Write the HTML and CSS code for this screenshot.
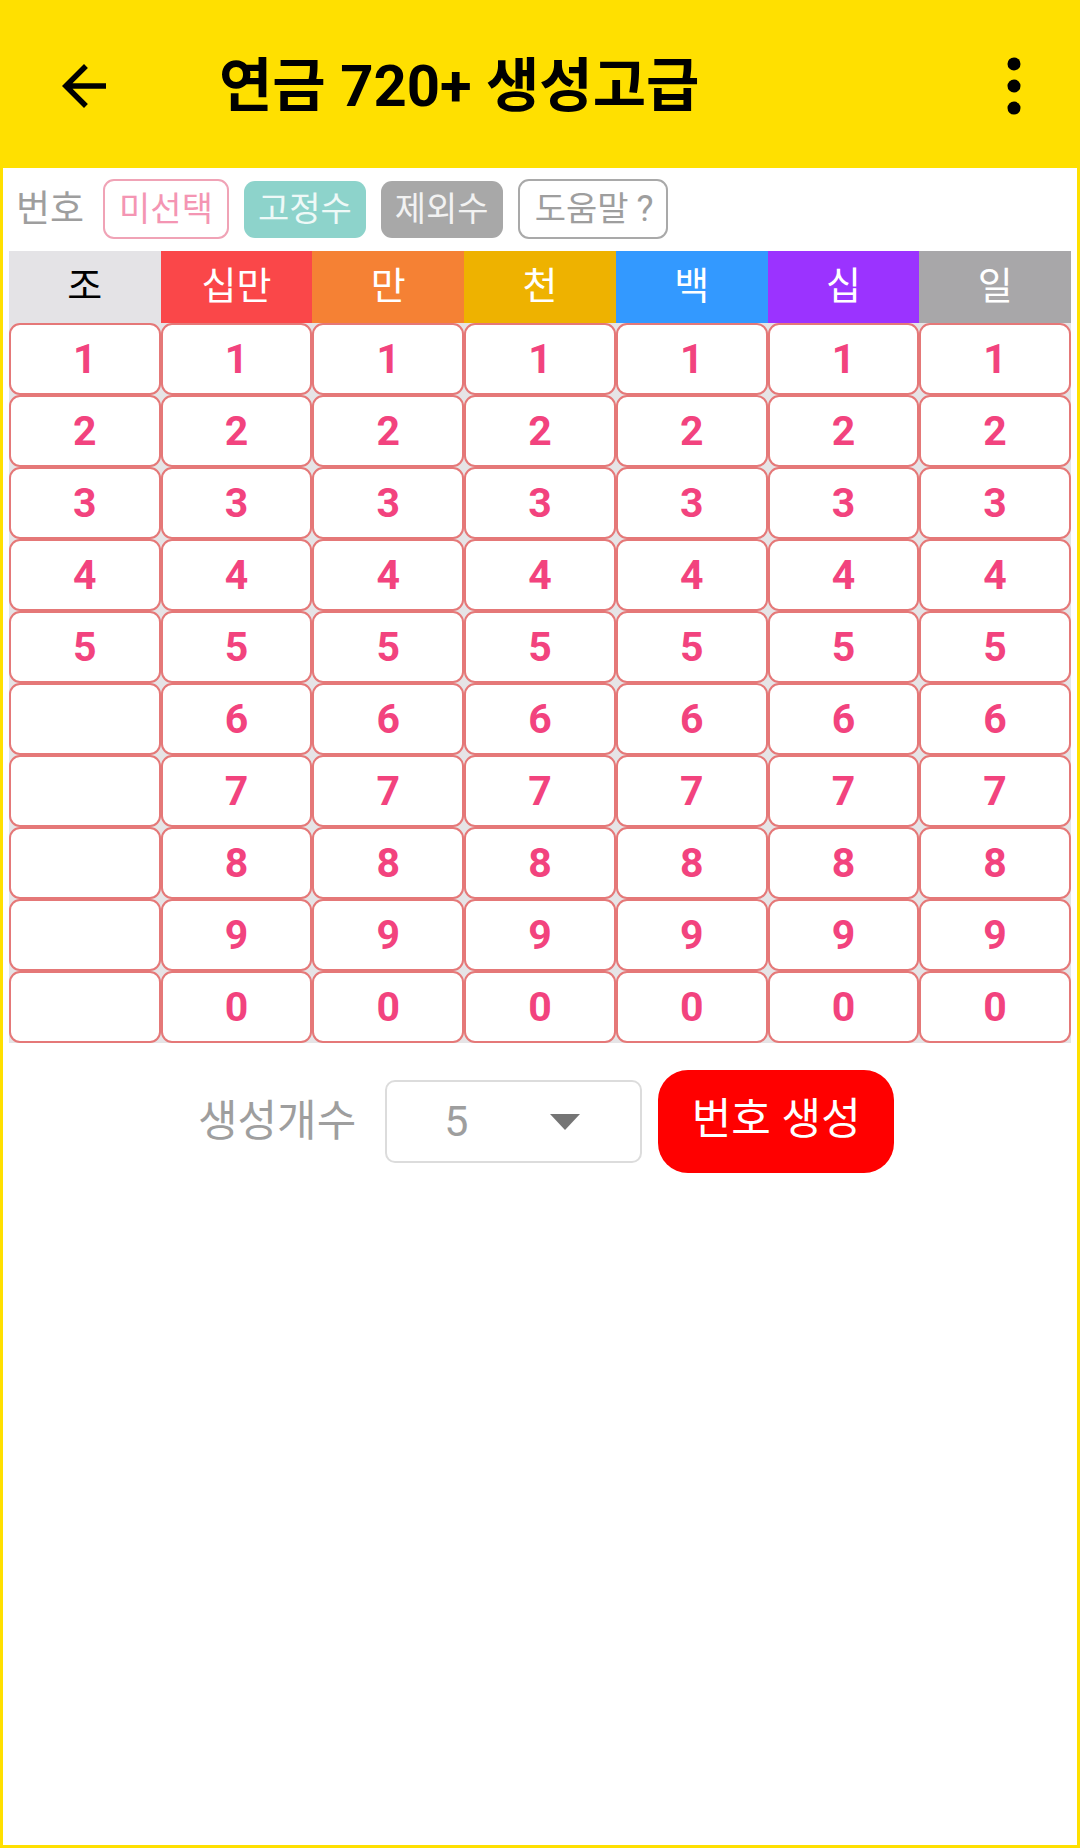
FILE: index.html
```html
<!DOCTYPE html>
<html lang="ko">
<head>
<meta charset="utf-8">
<title>연금 720+ 생성고급</title>
<link rel="stylesheet" href="styles.css">
</head>
<body>
<div class="page">
  <header class="appbar">
    <button class="icon-btn back" aria-label="뒤로">
      <svg viewBox="0 0 24 24" width="66" height="66"><path d="M20 11H7.83l5.59-5.59L12 4l-8 8 8 8 1.41-1.41L7.83 13H20v-2z" fill="#000"/></svg>
    </button>
    <h1 class="title">연금 720+ 생성고급</h1>
    <button class="icon-btn menu" aria-label="메뉴">
      <svg viewBox="0 0 24 24" width="68" height="68"><circle cx="12" cy="4.2" r="2.3" fill="#000"/><circle cx="12" cy="12" r="2.3" fill="#000"/><circle cx="12" cy="19.8" r="2.3" fill="#000"/></svg>
    </button>
  </header>

  <main class="content">
    <div class="legend">
      <span class="legend-label">번호</span>
      <span class="chip chip-none">미선택</span>
      <span class="chip chip-fixed">고정수</span>
      <span class="chip chip-excl">제외수</span>
      <span class="chip chip-help">도움말<span class="q">?</span></span>
    </div>

    <div class="board">
      <div class="head h-jo">조</div>
      <div class="head h-100k">십만</div>
      <div class="head h-10k">만</div>
      <div class="head h-1k">천</div>
      <div class="head h-100">백</div>
      <div class="head h-10">십</div>
      <div class="head h-1">일</div>

      <div class="cell">1</div><div class="cell">1</div><div class="cell">1</div><div class="cell">1</div><div class="cell">1</div><div class="cell">1</div><div class="cell">1</div>
      <div class="cell">2</div><div class="cell">2</div><div class="cell">2</div><div class="cell">2</div><div class="cell">2</div><div class="cell">2</div><div class="cell">2</div>
      <div class="cell">3</div><div class="cell">3</div><div class="cell">3</div><div class="cell">3</div><div class="cell">3</div><div class="cell">3</div><div class="cell">3</div>
      <div class="cell">4</div><div class="cell">4</div><div class="cell">4</div><div class="cell">4</div><div class="cell">4</div><div class="cell">4</div><div class="cell">4</div>
      <div class="cell">5</div><div class="cell">5</div><div class="cell">5</div><div class="cell">5</div><div class="cell">5</div><div class="cell">5</div><div class="cell">5</div>
      <div class="cell"></div><div class="cell">6</div><div class="cell">6</div><div class="cell">6</div><div class="cell">6</div><div class="cell">6</div><div class="cell">6</div>
      <div class="cell"></div><div class="cell">7</div><div class="cell">7</div><div class="cell">7</div><div class="cell">7</div><div class="cell">7</div><div class="cell">7</div>
      <div class="cell"></div><div class="cell">8</div><div class="cell">8</div><div class="cell">8</div><div class="cell">8</div><div class="cell">8</div><div class="cell">8</div>
      <div class="cell"></div><div class="cell">9</div><div class="cell">9</div><div class="cell">9</div><div class="cell">9</div><div class="cell">9</div><div class="cell">9</div>
      <div class="cell"></div><div class="cell">0</div><div class="cell">0</div><div class="cell">0</div><div class="cell">0</div><div class="cell">0</div><div class="cell">0</div>
    </div>

    <div class="controls">
      <span class="count-label">생성개수</span>
      <div class="spinner">
        <span class="spinner-value">5</span>
        <span class="spinner-arrow"></span>
      </div>
      <button class="generate">번호 생성</button>
    </div>
  </main>
</div>
</body>
</html>
```

FILE: styles.css
```css
* {
  box-sizing: border-box;
}

html, body {
  margin: 0;
  padding: 0;
}

body {
  width: 1080px;
  height: 1848px;
  background: #ffe000;
  font-family: Roboto, "Noto Sans CJK KR", sans-serif;
  overflow: hidden;
}

.page {
  display: flex;
  flex-direction: column;
  height: 1848px;
}

.appbar {
  height: 168px;
  flex: none;
  display: flex;
  align-items: center;
  padding-top: 4px;
  background: #ffe000;
}

.icon-btn {
  border: 0;
  background: transparent;
  padding: 0;
  margin: 0;
  display: flex;
  align-items: center;
  justify-content: center;
  cursor: pointer;
}

.back {
  width: 66px;
  height: 66px;
  margin-left: 51px;
}

.title {
  margin: 0 0 0 102px;
  font-size: 58px;
  font-weight: 700;
  color: #000;
  letter-spacing: 0;
  flex: 1;
  line-height: 1;
}

.menu {
  width: 68px;
  height: 68px;
  margin-right: 32px;
}

.content {
  flex: 1;
  margin: 0 3px 3px;
  background: #fff;
  display: flex;
  flex-direction: column;
}

.legend {
  display: flex;
  align-items: center;
  margin-top: 11px;
  padding-left: 13px;
  height: 60px;
}

.legend-label {
  font-size: 37px;
  color: #9e9e9e;
  margin-right: 19px;
  line-height: 1;
}

.chip {
  height: 60px;
  display: flex;
  align-items: center;
  padding: 0 14px;
  border-radius: 11px;
  font-size: 34px;
  line-height: 1;
  margin-right: 15px;
}

.chip-none {
  border: 2px solid #f0a3b6;
  color: #f495b3;
  background: #fff;
}

.chip-fixed {
  height: 57px;
  background: #8dd3cb;
  color: #eef9f7;
}

.chip-excl {
  height: 57px;
  background: #a8a8a8;
  color: #f2f2f2;
}

.chip-help {
  border: 2px solid #a9a9a9;
  color: #9e9e9e;
  background: #fff;
  padding: 0 13px 0 15px;
}

.chip-help .q {
  font-size: 36px;
  margin-left: 8px;
}

.board {
  margin: 12px 6px 0;
  display: grid;
  grid-template-columns: repeat(7, 1fr);
  grid-template-rows: 72px repeat(10, 72px);
  background: #e6e4e6;
}

.head {
  display: flex;
  align-items: center;
  justify-content: center;
  font-size: 38px;
  color: #fff;
  line-height: 1;
  padding-bottom: 2px;
}

.h-jo { background: #e4e3e6; color: #000; }
.h-100k { background: #fa4749; }
.h-10k { background: #f58134; }
.h-1k { background: #eeb200; }
.h-100 { background: #3399ff; }
.h-10 { background: #9b33ff; }
.h-1 { background: #a8a7a9; }

.cell {
  background: #fff;
  border: 2.5px solid #e57878;
  border-radius: 11px;
  display: flex;
  align-items: center;
  justify-content: center;
  font-size: 41px;
  font-weight: 700;
  color: #f2437e;
  line-height: 1;
}

.controls {
  display: flex;
  align-items: center;
  margin-top: 27px;
  padding-left: 195px;
}

.count-label {
  font-size: 43px;
  color: #9e9e9e;
  line-height: 1;
  margin-right: 29px;
}

.spinner {
  width: 257px;
  height: 83px;
  border: 2px solid #dcdcdc;
  border-radius: 10px;
  display: flex;
  align-items: center;
  padding: 0 60px 0 57px;
}

.spinner-value {
  font-size: 43px;
  color: #9e9e9e;
  line-height: 1;
}

.spinner-arrow {
  margin-left: auto;
  width: 0;
  height: 0;
  border-left: 15px solid transparent;
  border-right: 15px solid transparent;
  border-top: 16px solid #757575;
}

.generate {
  margin-left: 16px;
  width: 236px;
  height: 103px;
  border: 0;
  border-radius: 30px;
  background: #ff0000;
  color: #fff;
  font-family: Roboto, "Noto Sans CJK KR", sans-serif;
  font-size: 43px;
  line-height: 1;
  padding: 0 0 4px;
}
```
